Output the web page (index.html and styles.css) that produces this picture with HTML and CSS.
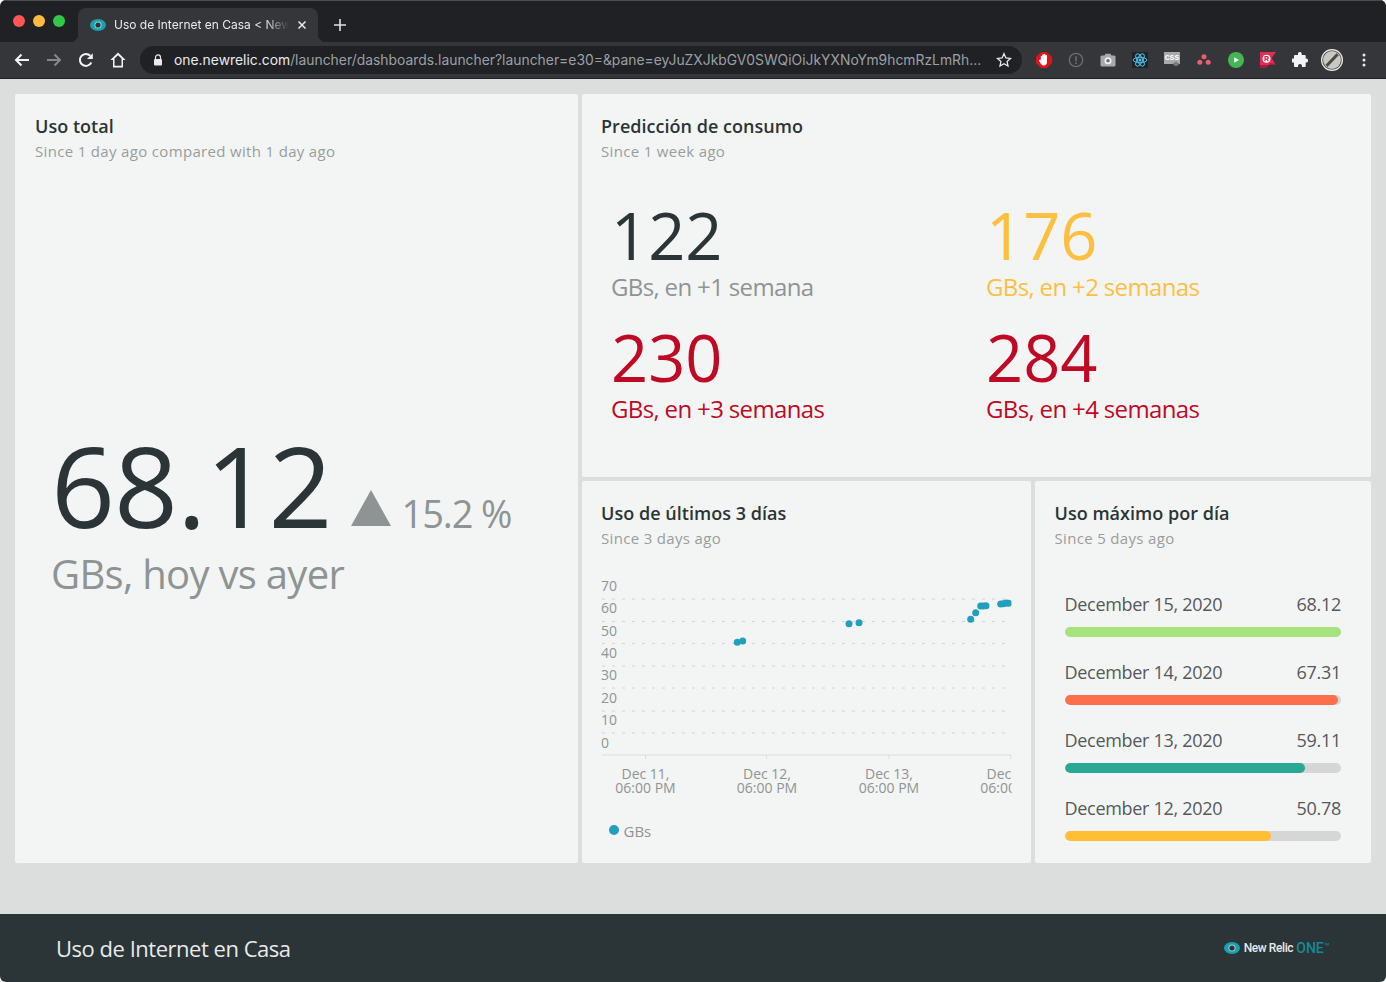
FILE: index.html
```html
<!DOCTYPE html>
<html lang="es">
<head>
<meta charset="utf-8">
<title>Uso de Internet en Casa</title>
<link rel="stylesheet" href="styles.css">
</head>
<body>
<div class="window">
  <header class="chrome">
    <div class="titlebar">
      <div class="lights"><span class="light red"></span><span class="light yellow"></span><span class="light green"></span></div>
      <div class="tab">
        <svg class="tab-logo" viewBox="0 0 16 12"><ellipse cx="8" cy="6" rx="8" ry="6" fill="#1c9fae"/><circle cx="8" cy="6" r="3.6" fill="#9ad4da"/><circle cx="8" cy="6" r="2.6" fill="#2b3437"/></svg>
        <span class="tab-title">Uso de Internet en Casa &lt; New Relic One</span>
        <svg class="tab-close" viewBox="0 0 10 10"><path d="M1.5 1.5l7 7M8.5 1.5l-7 7" stroke="#e8eaed" stroke-width="1.5" fill="none"/></svg>
      </div>
      <svg class="new-tab" viewBox="0 0 12 12"><path d="M6 0v12M0 6h12" stroke="#dfe1e5" stroke-width="1.6" fill="none"/></svg>
    </div>
    <div class="toolbar">
      <span class="tool"><svg class="ico" viewBox="0 0 16 16"><path d="M15 8H2M7.500 2.500L2 8l5.500 5.500" stroke="#f1f3f4" stroke-width="2" fill="none"/></svg></span>
      <span class="tool"><svg class="ico" viewBox="0 0 16 16"><path d="M1 8h13M8.500 2.500L14 8l-5.500 5.500" stroke="#85878a" stroke-width="2" fill="none"/></svg></span>
      <span class="tool"><svg class="ico" viewBox="0 0 16 16"><path d="M13.300 10.500A6 6 0 1 1 12.300 3.800" stroke="#f1f3f4" stroke-width="2" fill="none"/><path d="M14.800 1.200v5.800H9z" fill="#f1f3f4"/></svg></span>
      <span class="tool"><svg class="ico" viewBox="0 0 16 16"><path d="M8 .6L.4 8H3v7.400h10V8h2.600zM8 3.200l3.500 3.400v7.100h-7V6.600z" fill="#f1f3f4"/></svg></span>
      <div class="omnibox">
        <svg class="lock" viewBox="0 0 10 12"><path d="M2.500 5V3.400a2.500 2.500 0 0 1 5 0V5" stroke="#e8eaed" stroke-width="1.200" fill="none"/><rect x="1" y="5" width="8" height="6.500" rx="1" fill="#e8eaed"/></svg>
        <span class="url"><span class="host">one.newrelic.com</span>/launcher/dashboards.launcher?launcher=e30=&amp;pane=eyJuZXJkbGV0SWQiOiJkYXNoYm9hcmRzLmRh...</span>
        <svg class="star" viewBox="0 0 16 16"><path d="M8 1.700l1.900 4.200 4.600.5-3.400 3.100.9 4.600L8 11.800l-4 2.300.9-4.600L1.500 6.400l4.600-.5z" stroke="#e8eaed" stroke-width="1.300" fill="none"/></svg>
      </div>
      <div class="extensions">
        <span class="tool"><svg class="ico" viewBox="0 0 16 16"><path d="M5 0h6l5 5v6l-5 5H5l-5-5V5z" fill="#e3101a"/><path d="M4.800 7.500V4.200a.8.800 0 0 1 1.500 0V3a.8.800 0 0 1 1.600 0v-.3a.8.800 0 0 1 1.600 0V3.500a.8.800 0 0 1 1.500 0V10c0 2.200-1.300 3.500-3.100 3.500-1.500 0-2.300-.7-3-1.800L3 9c-.5-.9.600-1.700 1.300-1z" fill="#fff"/></svg></span>
        <span class="tool"><svg class="ico" viewBox="0 0 16 16"><circle cx="8" cy="8" r="6.700" stroke="#6b6d70" stroke-width="1.300" fill="none"/><path d="M8 4.200v5" stroke="#6b6d70" stroke-width="1.600"/><circle cx="8" cy="11.300" r="1" fill="#6b6d70"/></svg></span>
        <span class="tool"><svg class="ico" viewBox="0 0 16 16"><path d="M1.500 3.500h3l1-1.800h5l1 1.800h3a1.200 1.200 0 0 1 1 1.200v8.600a1.200 1.200 0 0 1-1 1.200h-13a1.200 1.200 0 0 1-1-1.200V4.700a1.200 1.200 0 0 1 1-1.200z" fill="#a7a9ab"/><circle cx="8" cy="8.800" r="3.500" fill="#f4f4f4"/><circle cx="8" cy="8.800" r="1.800" fill="#6d6f72"/></svg></span>
        <span class="tool"><svg class="ico" viewBox="0 0 16 16"><rect width="16" height="16" fill="#20232a"/><g fill="none" stroke="#4fc3e8" stroke-width="1"><ellipse cx="8" cy="8" rx="6.800" ry="2.700"/><ellipse cx="8" cy="8" rx="6.800" ry="2.700" transform="rotate(60 8 8)"/><ellipse cx="8" cy="8" rx="6.800" ry="2.700" transform="rotate(120 8 8)"/></g><circle cx="8" cy="8" r="1.500" fill="#4fc3e8"/></svg></span>
        <span class="tool"><span class="css-ico"><span class="css-text">CSS</span><svg class="css-check" viewBox="0 0 8 6"><path d="M4 .5L7.500 3 4 5.500.5 3z" fill="#77797c"/></svg></span></span>
        <span class="tool"><svg class="ico" viewBox="0 0 16 16"><circle cx="8" cy="4.800" r="2.500" fill="#e8606c"/><circle cx="3.800" cy="10.300" r="2.500" fill="#e8606c"/><circle cx="12.200" cy="10.300" r="2.500" fill="#e8606c"/></svg></span>
        <span class="tool"><svg class="ico" viewBox="0 0 16 16"><circle cx="8" cy="8" r="8" fill="#46b555"/><path d="M6.200 5.200L11 8l-4.800 2.800z" fill="#f4f4f4"/></svg></span>
        <span class="tool"><svg class="ico" viewBox="0 0 16 16"><path d="M0 0h16l-4.500 6 4.500 7H0z" fill="#e02d55"/><path d="M0 13h16l-1-1.600H10L6 16H0z" fill="#a51d3b"/><circle cx="6.500" cy="6.700" r="4" fill="#fff"/><path d="M5 9.200V4.600h1.700a1.300 1.300 0 0 1 .4 2.600L8.200 9.200M5 7.200h1.700" stroke="#d8234b" stroke-width="1.200" fill="none"/></svg></span>
        <span class="tool"><svg class="ico" viewBox="0 0 16 16"><path d="M6 1.500a1.900 1.900 0 0 1 3.700 0V3h3a1 1 0 0 1 1 1v2.500h.4a2 2 0 0 1 0 4h-.4V14a1 1 0 0 1-1 1H10v-1a2 2 0 0 0-4 0v1H3a1 1 0 0 1-1-1v-3.500H1a2 2 0 0 1 0-4h1V4a1 1 0 0 1 1-1h3z" fill="#f1f3f4"/></svg></span>
        <span class="tool"><svg class="avatar" viewBox="0 0 22 22"><circle cx="11" cy="11" r="11" fill="#ecece8"/><circle cx="11" cy="11" r="9.800" fill="#55564f"/><circle cx="11" cy="11" r="8.900" fill="#c9c8c1"/><path d="M4.500 15.800L15.500 4.200l2.200 2L6.500 17.900z" fill="#4a4b45"/></svg></span>
        <span class="tool"><svg class="ico" viewBox="0 0 16 16"><circle cx="8" cy="3" r="1.500" fill="#e8eaed"/><circle cx="8" cy="8" r="1.500" fill="#e8eaed"/><circle cx="8" cy="13" r="1.500" fill="#e8eaed"/></svg></span>
      </div>
    </div>
  </header>

  <main class="dashboard">
    <section class="card card-total">
      <h2 class="card-title">Uso total</h2>
      <p class="card-sub">Since 1 day ago compared with 1 day ago</p>
      <div class="total">
        <div class="total-row">
          <span class="total-value">68.12</span>
          <svg class="total-arrow" viewBox="0 0 40 36"><path d="M20 0l20 36H0z" fill="#8e9493"/></svg>
          <span class="total-delta">15.2 %</span>
        </div>
        <div class="total-label">GBs, hoy vs ayer</div>
      </div>
    </section>

    <section class="card card-forecast">
      <h2 class="card-title">Predicción de consumo</h2>
      <p class="card-sub">Since 1 week ago</p>
      <div class="forecast">
        <div class="stat"><div class="stat-value tone-dark">122</div><div class="stat-label tone-grey">GBs, en +1 semana</div></div>
        <div class="stat"><div class="stat-value tone-amber">176</div><div class="stat-label tone-amber">GBs, en +2 semanas</div></div>
        <div class="stat"><div class="stat-value tone-red">230</div><div class="stat-label tone-red">GBs, en +3 semanas</div></div>
        <div class="stat"><div class="stat-value tone-red">284</div><div class="stat-label tone-red">GBs, en +4 semanas</div></div>
      </div>
    </section>

    <section class="card card-chart">
      <h2 class="card-title">Uso de últimos 3 días</h2>
      <p class="card-sub">Since 3 days ago</p>
      <svg class="chart" viewBox="0 0 449 290">
        <defs><clipPath id="plot"><rect x="0" y="0" width="429.500" height="290"/></clipPath></defs>
        <g class="grid">
          <path d="M20 29H428M20 51.500H428M20 73.500H428M20 96H428M20 118H428M20 141H428M20 163H428"/>
        </g>
        <path class="axis" d="M20 185H429.500M63.500 185v4M184.700 185v4M307 185v4M428.700 185v4"/>
        <g class="y-labels">
          <text x="19" y="21">70</text><text x="19" y="43">60</text><text x="19" y="66">50</text><text x="19" y="88">40</text><text x="19" y="110">30</text><text x="19" y="133">20</text><text x="19" y="155">10</text><text x="19" y="178">0</text>
        </g>
        <g class="x-labels" clip-path="url(#plot)">
          <text x="63.500" y="209">Dec 11,</text><text x="63.500" y="223">06:00 PM</text>
          <text x="185" y="209">Dec 12,</text><text x="185" y="223">06:00 PM</text>
          <text x="307" y="209">Dec 13,</text><text x="307" y="223">06:00 PM</text>
          <text x="428.500" y="209">Dec 14,</text><text x="428.500" y="223">06:00 PM</text>
        </g>
        <g class="points" clip-path="url(#plot)">
          <circle cx="155.300" cy="72.300"/><circle cx="160.700" cy="71"/>
          <circle cx="267" cy="53.700"/><circle cx="277" cy="52.700"/>
          <circle cx="388.700" cy="49.300"/><circle cx="393.700" cy="42.700"/><circle cx="398.700" cy="36"/><circle cx="401.300" cy="36"/><circle cx="404" cy="35.700"/>
          <circle cx="418.700" cy="34"/><circle cx="421.300" cy="33.700"/><circle cx="424" cy="33"/><circle cx="426.500" cy="33.300"/>
        </g>
      </svg>
      <div class="legend"><span class="legend-dot"></span>GBs</div>
    </section>

    <section class="card card-bars">
      <h2 class="card-title">Uso máximo por día</h2>
      <p class="card-sub">Since 5 days ago</p>
      <ul class="bars">
        <li class="bar-item">
          <div class="bar-head"><span>December 15, 2020</span><span>68.12</span></div>
          <div class="track"><div class="fill fill-green" style="width:100%"></div></div>
        </li>
        <li class="bar-item">
          <div class="bar-head"><span>December 14, 2020</span><span>67.31</span></div>
          <div class="track"><div class="fill fill-orange" style="width:98.8%"></div></div>
        </li>
        <li class="bar-item">
          <div class="bar-head"><span>December 13, 2020</span><span>59.11</span></div>
          <div class="track"><div class="fill fill-teal" style="width:87%"></div></div>
        </li>
        <li class="bar-item">
          <div class="bar-head"><span>December 12, 2020</span><span>50.78</span></div>
          <div class="track"><div class="fill fill-amber" style="width:74.6%"></div></div>
        </li>
      </ul>
    </section>
  </main>

  <footer class="footer">
    <span class="footer-title">Uso de Internet en Casa</span>
    <div class="brand">
      <svg class="brand-logo" viewBox="0 0 16 12"><ellipse cx="8" cy="6" rx="8" ry="6" fill="#1c9fae"/><circle cx="8" cy="6" r="3.600" fill="#9ad4da"/><circle cx="8" cy="6" r="2.600" fill="#2b3437"/></svg>
      <span class="brand-name">New Relic</span>
      <span class="brand-one">ONE</span><span class="brand-tm">™</span>
    </div>
  </footer>
</div>
</body>
</html>
```
FILE: styles.css
```css
* { box-sizing: border-box; }
html, body { margin: 0; padding: 0; background: #fff; }
body { font-family: "Open Sans", sans-serif; }
h2, p, ul { margin: 0; padding: 0; }
ul { list-style: none; }

.window { width: 1386px; height: 982px; display: flex; flex-direction: column; background: #dcdedd; overflow: hidden; border-radius: 6px; }

/* Browser chrome */
.chrome { flex: none; height: 79px; display: flex; flex-direction: column; }
.titlebar { height: 42px; background: #202124; border-top: 1px solid #4a4b4e; display: flex; align-items: flex-end; }
.lights { width: 78px; height: 100%; display: flex; gap: 8px; padding: 14px 0 0 13px; }
.light { width: 12px; height: 12px; border-radius: 50%; }
.red { background: #fc5753; }
.yellow { background: #fdbc40; }
.green { background: #33c748; }
.tab { position: relative; width: 240px; height: 34px; background: #35363a; border-radius: 8px 8px 0 0; display: flex; align-items: center; padding: 0 11px 0 12px; }
.tab::before, .tab::after { content: ""; position: absolute; bottom: 0; width: 8px; height: 8px; }
.tab::before { left: -8px; background: radial-gradient(circle at 0 0, #202124 8px, #35363a 8.5px); }
.tab::after { right: -8px; background: radial-gradient(circle at 100% 0, #202124 8px, #35363a 8.5px); }
.tab-logo { width: 16px; height: 12px; flex: none; }
.tab-title { width: 175px; margin-left: 8px; font: 12px/16px Inter, Roboto, sans-serif; color: #e8eaed; white-space: nowrap; overflow: hidden; -webkit-mask-image: linear-gradient(90deg, #000 150px, transparent 175px); mask-image: linear-gradient(90deg, #000 150px, transparent 175px); }
.tab-close { width: 10px; height: 10px; margin-left: 9px; flex: none; }
.new-tab { width: 12px; height: 12px; margin: 0 0 11px 16px; }

.toolbar { height: 37px; background: #35363a; border-bottom: 1px solid #1f2023; display: flex; align-items: center; padding: 0 6px; }
.tool { width: 32px; height: 32px; flex: none; display: flex; align-items: center; justify-content: center; }
.ico { width: 16px; height: 16px; display: block; }
.avatar { width: 22px; height: 22px; display: block; }
.omnibox { width: 882px; height: 28px; margin-left: 6px; flex: none; background: #202124; border-radius: 14px; display: flex; align-items: center; padding: 0 10px 0 13px; }
.lock { width: 10px; height: 12px; flex: none; }
.url { flex: 1; margin-left: 11px; font: 13.880px/18px Inter, Roboto, sans-serif; color: #9aa0a6; white-space: nowrap; overflow: hidden; }
.host { color: #e8eaed; }
.star { width: 16px; height: 16px; flex: none; }
.extensions { display: flex; margin-left: 6px; }
.css-ico { position: relative; width: 16px; height: 12px; background: #a7a9ab; display: flex; align-items: center; justify-content: center; margin-top: -4px; }
.css-text { font: 700 8px/10px "Liberation Mono", monospace; color: #fff; }
.css-check { position: absolute; width: 8px; height: 6px; right: 0; bottom: -3px; }

/* Dashboard */
.dashboard { flex: 1; display: grid; grid-template-columns: 563px 449.500px 336.500px; grid-template-rows: 383px 382.500px; gap: 3.500px; padding: 15px 15px 0; align-content: start; }
.card { background: #f3f5f4; padding: 20px; border-radius: 2px; display: flex; flex-direction: column; }
.card-total { grid-column: 1; grid-row: 1 / 3; }
.card-forecast { grid-column: 2 / 4; grid-row: 1; padding-left: 19.500px; }
.card-chart { grid-column: 2; grid-row: 2; padding-right: 0; padding-left: 0; }
.card-bars { grid-column: 3; grid-row: 2; }
.card-title { font-size: 18px; line-height: 24px; font-weight: 600; color: #2b3437; letter-spacing: .03px; }
.card-sub { margin-top: 2px; font-size: 15px; line-height: 22px; color: #999d9c; letter-spacing: .33px; }
.card-chart .card-title, .card-chart .card-sub { padding-left: 19.500px; }

.total { margin-top: 258px; padding-left: 16px; }
.total-row { display: flex; align-items: baseline; }
.total-value { font-size: 112px; line-height: 130px; color: #2b3437; font-weight: 400; letter-spacing: -1px; }
.total-arrow { width: 40px; height: 36px; margin-left: 19px; align-self: flex-end; margin-bottom: 24px; }
.total-delta { font-size: 38px; line-height: 44px; color: #8e9493; margin-left: 11px; letter-spacing: -1.100px; }
.total-label { font-size: 40px; line-height: 48px; color: #8e9493; letter-spacing: -.7px; }

.forecast { display: grid; grid-template-columns: 375px 375px; grid-auto-rows: 122px; padding: 36px 0 0 10px; }
.stat-value { font-size: 65px; line-height: 74px; }
.stat-label { font-size: 24px; line-height: 30px; letter-spacing: -.65px; }
.tone-dark { color: #2b3437; }
.tone-grey { color: #8e9493; }
.tone-amber { color: #fdbf42; }
.tone-red { color: #bf0a26; }

.chart { width: 449px; height: 290px; display: block; margin: 21.500px 0 0 .5px; flex: none; }
.grid path { stroke: #d2d4d3; stroke-width: 1; stroke-dasharray: 3 7; fill: none; }
.axis { stroke: #dcdedd; stroke-width: 1; fill: none; }
.y-labels text { font-size: 14px; fill: #8e9493; }
.x-labels text { font-size: 14px; fill: #8e9493; text-anchor: middle; }
.points circle { fill: #239fbe; r: 3.500px; }
.legend { display: flex; align-items: center; font-size: 15px; line-height: 20px; color: #8e9493; margin-top: -39px; padding-left: 27px; }
.legend-dot { width: 10px; height: 10px; border-radius: 50%; background: #239fbe; margin-right: 5px; margin-top: -3px; }

.bars { padding: 42.500px 10px 0; }
.bar-item { height: 68px; }
.bar-head { display: flex; justify-content: space-between; font-size: 18px; line-height: 26px; color: #55595a; letter-spacing: -.3px; }
.track { height: 10px; margin-top: 10px; border-radius: 5px; background: #d5d6d5; overflow: hidden; }
.fill { height: 100%; border-radius: 5px; }
.fill-green { background: #a6e37d; }
.fill-orange { background: #fb6f4a; }
.fill-teal { background: #2ba893; }
.fill-amber { background: #ffbf33; }

/* Footer */
.footer { flex: none; height: 68px; background: #2b3437; display: flex; align-items: center; justify-content: space-between; padding: 0 56px; }
.footer-title { font-size: 22px; line-height: 30px; color: #e8eaea; letter-spacing: -.48px; }
.brand { display: flex; align-items: center; }
.brand-logo { width: 16px; height: 12px; margin-right: 4px; }
.brand-name { font: 500 12px/16px Roboto, sans-serif; color: #e8eaea; letter-spacing: -.4px; }
.brand-one { font: 500 14px/16px Roboto, sans-serif; color: #158a97; margin-left: 3px; }
.brand-tm { font: 10px/16px Roboto, sans-serif; color: #158a97; margin-bottom: 3px; }
```
